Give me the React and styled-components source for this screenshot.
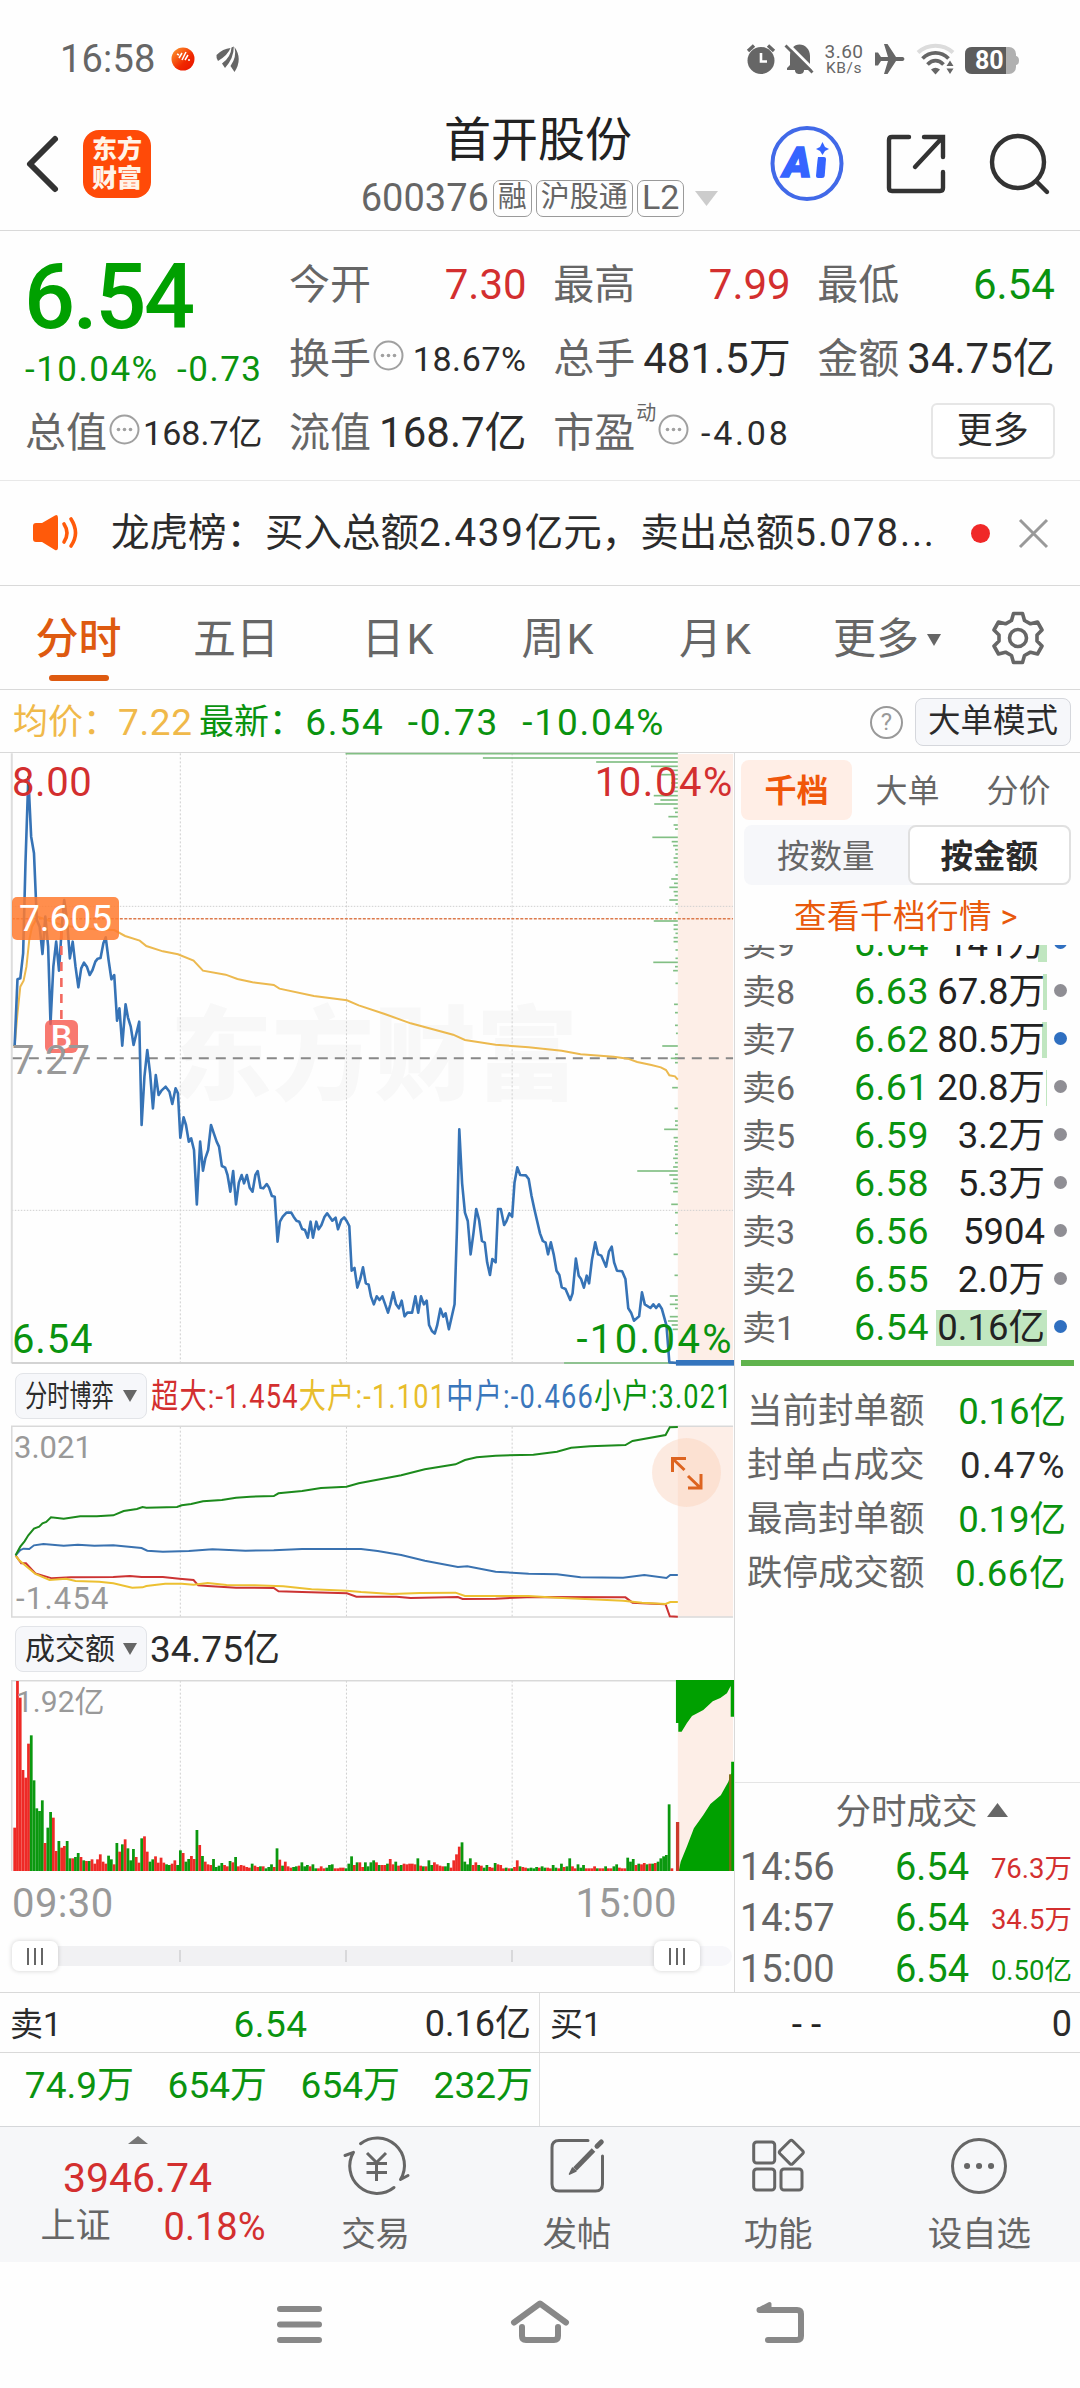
import styled, { createGlobalStyle } from "styled-components";

const colors = {
  green: "#0a930f",
  red: "#d32f2f",
  gray: "#666666",
  light: "#999999",
  dark: "#2b2b2b",
  orange: "#de5a10",
  yellow: "#f0b94a",
  blue: "#3a76bb",
  line: "#d9d9d9",
};

const GlobalStyle = createGlobalStyle`
  * {
    box-sizing: border-box;
  }
  body {
    margin: 0;
    background: #ffffff;
    color: ${colors.dark};
    font-family: Roboto, "Noto Sans CJK SC", sans-serif;
    line-height: 1;
  }
  svg {
    display: block;
    flex-shrink: 0;
    overflow: visible;
  }
`;

// ---------- data ----------

const quotes = [
  { label: "今开", value: "7.30", color: colors.red },
  { label: "最高", value: "7.99", color: colors.red },
  { label: "最低", value: "6.54", color: colors.green },
  { label: "换手", value: "18.67%", dots: true },
  { label: "总手", value: "481.5万" },
  { label: "金额", value: "34.75亿" },
];

const asks = [
  { name: "卖9", price: "6.64", amount: "141万", bar: 9, dot: "#2f6fc0" },
  { name: "卖8", price: "6.63", amount: "67.8万", bar: 4 },
  { name: "卖7", price: "6.62", amount: "80.5万", bar: 5, dot: "#2f6fc0" },
  { name: "卖6", price: "6.61", amount: "20.8万", bar: 1 },
  { name: "卖5", price: "6.59", amount: "3.2万", bar: 0 },
  { name: "卖4", price: "6.58", amount: "5.3万", bar: 0 },
  { name: "卖3", price: "6.56", amount: "5904", bar: 0 },
  { name: "卖2", price: "6.55", amount: "2.0万", bar: 0 },
  { name: "卖1", price: "6.54", amount: "0.16亿", bar: 111, dot: "#2f6fc0" },
];

const seals = [
  { label: "当前封单额", value: "0.16亿", color: colors.green },
  { label: "封单占成交", value: "0.47%", color: colors.dark, spacing: 1.6 },
  { label: "最高封单额", value: "0.19亿", color: colors.green },
  { label: "跌停成交额", value: "0.66亿", color: colors.green, spacing: 0.6 },
];

const deals = [
  { time: "14:56", price: "6.54", amount: "76.3万", color: colors.red },
  { time: "14:57", price: "6.54", amount: "34.5万", color: colors.red },
  { time: "15:00", price: "6.54", amount: "0.50亿", color: colors.green },
];

const flows = [
  { text: "超大:-1.454", color: colors.red },
  { text: "大户:-1.101", color: "#e8bd2c" },
  { text: "中户:-0.466", color: colors.blue },
  { text: "小户:3.021", color: colors.green },
];

const priceLine =
  "31,918 37,718 43,715 49,640 54,368 60,112 66,290 72,340 78,540 84,560 90,642 96,530 102,620 107,852 113,680 119,605 125,692 131,560 136,480 142,540 148,655 154,605 160,680 166,742 172,685 178,668 184,680 190,705 196,690 202,665 207,656 213,654 219,610 224,592 230,660 236,718 242,705 248,842 253,805 259,917 266,793 271,832 277,860 283,915 289,880 295,845 300,1155 306,1010 312,930 318,1000 324,1105 330,1005 336,1065 342,1052 351,1040 359,1055 365,1092 372,1045 377,1060 382,1193 389,1132 394,1155 400,1205 405,1195 411,1230 417,1393 424,1205 430,1292 435,1255 441,1230 447,1155 453,1180 459,1205 464,1220 470,1278 477,1283 482,1305 488,1355 494,1293 500,1393 506,1328 512,1305 517,1330 523,1305 529,1343 535,1355 541,1305 546,1293 552,1343 558,1345 565,1332 570,1343 576,1368 582,1370 588,1505 593,1445 599,1430 607,1418 617,1418 622,1430 628,1442 634,1445 640,1467 646,1470 652,1493 658,1445 663,1493 670,1445 675,1468 681,1455 687,1432 693,1420 699,1432 704,1442 711,1433 716,1468 723,1440 729,1432 734,1442 740,1458 745,1592 751,1584 757,1643 763,1618 769,1582 775,1630 781,1634 786,1670 792,1693 798,1669 804,1680 810,1669 816,1693 822,1718 827,1693 833,1657 839,1693 845,1705 851,1682 857,1729 863,1718 873,1718 880,1669 886,1718 892,1669 898,1693 904,1682 909,1755 915,1773 921,1781 926,1757 933,1706 939,1730 944,1720 951,1768 957,1730 963,1693 968,1470 973,1168 979,1330 985,1418 991,1443 997,1543 1003,1480 1009,1407 1015,1440 1021,1503 1027,1508 1032,1567 1038,1605 1043,1557 1050,1567 1055,1407 1061,1407 1068,1455 1073,1443 1079,1420 1085,1430 1090,1328 1096,1282 1102,1305 1114,1306 1120,1317 1126,1367 1132,1407 1144,1480 1150,1503 1156,1508 1161,1543 1167,1507 1173,1543 1179,1592 1185,1605 1190,1642 1198,1647 1208,1680 1213,1660 1220,1556 1226,1607 1231,1617 1237,1643 1243,1607 1248,1630 1254,1560 1261,1507 1267,1543 1274,1547 1284,1580 1290,1535 1296,1520 1301,1567 1307,1592 1318,1594 1325,1617 1331,1705 1337,1718 1343,1742 1354,1729 1360,1657 1366,1693 1378,1704 1384,1693 1390,1704 1396,1693 1402,1706 1412,1757 1418,1867 1436,1869";

const averageLine =
  "31,918 37,820 43,740 50,722 56,680 62,600 68,560 80,530 100,540 130,555 160,562 200,568 242,570 265,588 296,602 310,618 345,634 377,643 410,662 430,692 478,704 503,717 535,727 580,735 592,746 665,768 735,781 760,796 815,822 870,850 960,884 985,900 1050,914 1120,922 1190,932 1230,943 1300,950 1330,956 1350,966 1380,975 1400,982 1411,990 1418,1006 1430,1009 1436,1019";

// [y, left edge] of the horizontal bars that grow from the close line
const priceBars = [
  [41, 732], [54, 1023], [66, 1263], [79, 1379], [91, 1423], [104, 1395],
  [117, 1426], [129, 1422], [142, 1426], [154, 1428], [167, 1385], [180, 1399],
  [192, 1386], [205, 1427], [217, 1430], [230, 1416], [255, 1427], [267, 1430],
  [292, 1382], [305, 1423], [317, 1426], [329, 1430], [342, 1431], [354, 1427],
  [367, 1427], [380, 1431], [405, 1431], [417, 1422], [430, 1428], [442, 1418],
  [455, 1427], [467, 1429], [480, 1418], [492, 1431], [518, 1431], [543, 1385],
  [555, 1427], [568, 1427], [580, 1431], [593, 1427], [605, 1427], [630, 1431],
  [655, 1431], [667, 1384], [680, 1430], [692, 1426], [730, 1431], [793, 1428],
  [818, 1430], [856, 1430], [880, 1432], [918, 1403], [943, 1430], [955, 1421],
  [968, 1430], [1043, 1424], [1105, 1429], [1143, 1430], [1156, 1430],
  [1168, 1407], [1193, 1427], [1205, 1430], [1218, 1428], [1230, 1429],
  [1243, 1430], [1255, 1426], [1268, 1430], [1281, 1426], [1293, 1350],
  [1305, 1418], [1318, 1426], [1330, 1420], [1343, 1429], [1355, 1426],
  [1393, 1422], [1418, 1430], [1455, 1430], [1480, 1430], [1543, 1427],
  [1606, 1429], [1668, 1419], [1680, 1430], [1693, 1419], [1705, 1430],
  [1730, 1419], [1743, 1415], [1755, 1423], [1768, 1425], [1869, 1195],
];

const flowLines = [
  {
    color: "#cc3333",
    points:
      "33,616 45,640 55,640 75,670 110,685 150,682 240,681 275,678 300,681 345,681 380,686 410,690 420,706 440,708 500,713 580,714 590,724 640,726 735,730 755,740 840,740 870,744 970,741 980,747 1050,746 1130,741 1325,742 1340,758 1360,760 1410,763 1419,799 1436,800",
  },
  {
    color: "#ecc032",
    points:
      "33,616 40,630 55,648 75,672 105,690 140,686 160,693 210,695 240,700 280,713 302,712 310,708 350,701 385,701 410,704 440,699 480,705 540,706 600,709 660,718 735,722 765,726 830,732 890,729 965,728 985,738 1120,738 1180,743 1240,747 1320,752 1360,758 1410,762 1420,756 1436,756",
  },
  {
    color: "#3a72b0",
    points:
      "33,616 43,600 50,596 62,597 72,586 92,582 135,587 165,584 200,587 240,586 300,594 312,602 345,605 400,603 450,598 520,602 580,601 640,597 765,597 800,603 850,615 900,632 970,651 990,649 1050,665 1120,671 1180,673 1230,682 1320,683 1365,675 1412,684 1420,675 1436,675",
  },
  {
    color: "#1c8a1c",
    points:
      "33,616 43,590 52,574 60,556 72,536 83,530 90,520 98,516 108,502 135,506 170,499 205,499 240,496 262,483 290,477 302,471 310,473 375,471 385,466 405,462 430,454 470,450 500,443 530,440 580,438 590,430 640,423 680,414 734,410 760,400 850,376 900,358 965,343 985,330 1010,322 1050,317 1130,314 1180,305 1210,293 1250,289 1325,285 1340,273 1410,255 1419,232 1436,231",
  },
];

// one bar per minute, a negative number is a falling minute
const volumes = [
  130, 570, 520, 303, 280, 382, -407, -272, -188, -180, -212, 84, -130, -177,
  160, 60, -90, 70, 75, -90, -38, 38, -42, -54, 42, -32, 30, -30, 35, 22, 35,
  50, 28, 22, -46, -35, 20, -84, 58, -80, 95, -68, -32, -66, 42, 25, -98, 104,
  58, -28, -35, 44, 25, 40, 25, -20, -18, 22, 32, -18, -62, 54, -28, -36, 45,
  36, -123, 78, -45, 28, 20, 18, -36, -12, -16, -24, 18, 14, -30, 26, -42, 14,
  18, 16, 12, 10, -22, 16, 12, -14, 14, -8, -12, -20, 12, -68, 34, -16, 28, 14,
  10, -12, -14, 16, -26, -14, -18, 14, -20, -8, 8, 14, 8, -10, -18, -20, 8, 8,
  10, 10, -8, -22, -44, 18, -26, 26, 12, -26, -14, -26, -32, 26, -18, 18, 18,
  -22, 36, 20, -28, 16, -18, 22, 20, 22, 22, 20, -38, 16, -14, 14, -32, -18, 26,
  20, 16, 14, -14, -24, 10, 32, 50, 73, -86, -28, -20, -38, 18, 26, -18, 16,
  -10, -18, 12, 10, -24, 20, 18, 8, -10, 8, -8, 12, 32, -14, 12, 10, -8, -10,
  -8, -12, 10, -14, -10, 10, 8, -18, -10, 8, -22, 12, -14, -38, 14, 8, -20,
  -10, -18, 8, 8, 8, 14, -8, 8, 8, -14, 8, 8, -14, -20, 10, 8, 8, -40, -28,
  -36, 18, -22, 20, 24, -20, 22, -22, 24, -28, -38, -44, -48, -200, 8,
];

// ---------- icons ----------

const DotsCircle = () => (
  <svg width="31" height="31" viewBox="0 0 31 31">
    <circle cx="15.5" cy="15.5" r="14" fill="none" stroke="#a0a0a0" strokeWidth="2" />
    <circle cx="9.5" cy="15.5" r="1.8" fill="#a0a0a0" />
    <circle cx="15.5" cy="15.5" r="1.8" fill="#a0a0a0" />
    <circle cx="21.5" cy="15.5" r="1.8" fill="#a0a0a0" />
  </svg>
);

const Triangle = ({ w, h, color, up }) => (
  <svg width={w} height={h} viewBox="0 0 20 14" preserveAspectRatio="none">
    <path d={up ? "M10 0L20 14H0Z" : "M0 0H20L10 14Z"} fill={color} />
  </svg>
);

const StatusIcons = () => (
  <svg width="274" height="34" viewBox="0 0 274 34" fill="#666">
    {/* alarm */}
    <circle cx="15" cy="18.5" r="13.5" />
    <path d="M2 9L8 3.5M28 9L22 3.5" stroke="#666" strokeWidth="3.4" fill="none" />
    <path d="M15 11V19.5H21" stroke="#fff" strokeWidth="2.6" fill="none" />
    {/* muted bell */}
    <path d="M41 28V26L44 23V14C44 7 48 2.5 53.5 2.5S64 7 64 14V23L67 26V28H58C58 31 56 32 53.5 32S49 31 49 28Z" />
    <path d="M39 -1L69 29" stroke="#fefefe" strokeWidth="3" />
    <path d="M39.500 3.500L66.500 30.500" stroke="#666" strokeWidth="2.800" />
    {/* airplane */}
    <path d="M129 10.5H132L135 15H142L138 2H141.5L150 15H156.5C159 15.500 159 18.500 156.500 19H150L141.500 32H138L142 19H135L132 23.500H129Z" />
    {/* wifi */}
    <path d="M172 10.500C182 1.500 197 1.500 207 10.500" fill="none" stroke="#dcdcdc" strokeWidth="4" />
    <path d="M176.500 16.500C184 9 195 9 202.500 16.500M181.500 22.500C186.500 17.500 192.500 17.500 197.500 22.500" fill="none" stroke="#666" strokeWidth="3.800" />
    <path d="M185 27.500Q189.500 24 194 27.500L189.500 32.500Z" />
    <path d="M200.500 24L204 18.500L207.500 24ZM200.500 26.500L204 32L207.500 26.500Z" />
    {/* battery */}
    <rect x="219" y="5" width="51" height="27" rx="7" fill="#b0b0b0" />
    <path d="M226 5H260V32H226Q219 32 219 25V12Q219 5 226 5Z" fill="#5c5c5c" />
    <path d="M270 14Q273 14.500 273 18.500T270 23Z" fill="#b0b0b0" />
  </svg>
);

const Gear = () => (
  <svg width="54" height="54" viewBox="0 0 54 54" fill="none" stroke="#666" strokeWidth="3.6" strokeLinejoin="round">
    <path d="M22.500 2.500H31.500L33.500 9.500L39.500 12.800L46.500 11L51 19L46 24V30L51 35L46.500 43L39.500 41.200L33.500 44.500L31.500 51.500H22.500L20.500 44.500L14.500 41.200L7.500 43L3 35L8 30V24L3 19L7.500 11L14.500 12.800L20.500 9.500Z" />
    <circle cx="27" cy="27" r="8.500" />
  </svg>
);

const footerIcons = [
  {
    label: "交易",
    icon: (
      <>
        <path d="M17.500 10.700A27.300 27.300 0 0 1 57.500 46.500L65 42.500M51 54.500A27.300 27.300 0 0 1 10.500 19.300L2 22.500" />
        <path d="M24 20L33.500 29.500L43 20M33.500 29.500V48M23.500 30.500H44M23.500 39.500H44" strokeLinecap="butt" />
      </>
    ),
  },
  {
    label: "发帖",
    icon: (
      <>
        <path d="M44 7.500H15Q8 7.500 8 14.500V51Q8 58 15 58H51.500Q58.500 58 58.500 51V23" />
        <path d="M31 36L49.500 17" strokeWidth="5" strokeLinecap="butt" />
        <path d="M53 13.200L57.300 8.900" strokeWidth="5" />
        <path d="M25.500 41.200L28.500 35L32 38Z" fill="#666" strokeWidth="1.500" />
      </>
    ),
  },
  {
    label: "功能",
    icon: (
      <>
        <rect x="8.700" y="9" width="21" height="21" rx="3" />
        <rect x="8.700" y="36" width="21" height="21" rx="3" />
        <rect x="36" y="36" width="21" height="21" rx="3" />
        <path d="M44.800 8Q46.300 6.600 47.800 8L57.600 17.800Q59 19.300 57.600 20.800L47.800 30.600Q46.300 32 44.800 30.600L35 20.800Q33.600 19.300 35 17.800Z" />
      </>
    ),
  },
  {
    label: "设自选",
    icon: (
      <>
        <circle cx="33" cy="33" r="26.500" />
        <path d="M21 33H21.100M33 33H33.100M45 33H45.100" strokeWidth="6" />
      </>
    ),
  },
];

// ---------- charts ----------

const Grid = ({ top, bottom }) => (
  <g stroke="#cfcfcf" strokeWidth="1" strokeDasharray="2 2">
    {[382, 734, 1085].map((x) => (
      <line key={x} x1={x} x2={x} y1={top} y2={bottom} vectorEffect="non-scaling-stroke" />
    ))}
  </g>
);

const PriceChart = () => (
  <ChartBox $height={614}>
    <Watermark>东方财富</Watermark>
    <ChartSvg viewBox="0 36 1555 1842" preserveAspectRatio="none">
      <rect x="1436" y="42" width="117" height="1830" fill="#fdeee7" />
      <Grid top={40} bottom={1868} />
      <g fill="none" strokeWidth="1">
        <path d="M25 499H1553M25 1411H1553" stroke="#cfcfcf" strokeDasharray="1.5 1.5" vectorEffect="non-scaling-stroke" />
        <path d="M25 955H1553" stroke="#888" strokeWidth="2" strokeDasharray="10 7" vectorEffect="non-scaling-stroke" />
        <path d="M25 536H1553" stroke="#dc7a4c" strokeWidth="1.5" strokeDasharray="3 1.5" vectorEffect="non-scaling-stroke" />
        <path d="M25 40V1870" stroke="#dddddd" strokeWidth="2" vectorEffect="non-scaling-stroke" />
        <path d="M25 1869H1436" stroke="#d3d3d3" strokeWidth="2" vectorEffect="non-scaling-stroke" />
      </g>
      {priceBars.map(([y, x]) => (
        <rect key={y} x={x} y={y - 2.5} width={1436 - x} height="5" fill="#82bf84" />
      ))}
      <polyline points={averageLine} fill="none" stroke="#ecb94f" strokeWidth="2" vectorEffect="non-scaling-stroke" />
      <polyline points={priceLine} fill="none" stroke="#3673b6" strokeWidth="2.6" strokeLinejoin="round" vectorEffect="non-scaling-stroke" />
      <path d="M130 570V850" stroke="#f3695f" strokeWidth="2.6" strokeDasharray="9 7" vectorEffect="non-scaling-stroke" />
      <rect x="1432" y="1860" width="123" height="17" fill="#3474bd" />
    </ChartSvg>
    <BuyBadge>B</BuyBadge>
    <CostBadge>7.605</CostBadge>
    <ChartLabel $top={11} $left={12} $color={colors.red} $spacing={0.6}>8.00</ChartLabel>
    <ChartLabel $top={11} $right={0} $color={colors.red} $spacing={1.6}>10.04%</ChartLabel>
    <ChartLabel $top={289} $left={12} $color={colors.light}>7.27</ChartLabel>
    <ChartLabel $top={568} $left={12} $color={colors.green} $spacing={0.8}>6.54</ChartLabel>
    <ChartLabel $top={568} $right={0} $color={colors.green} $spacing={2.4}>-10.04%</ChartLabel>
  </ChartBox>
);

const FlowChart = () => (
  <ChartBox $height={192}>
    <ChartSvg viewBox="0 228 1555 576" preserveAspectRatio="none">
      <rect x="1436" y="230" width="117" height="570" fill="#fdeee7" />
      <Grid top={230} bottom={800} />
      <path d="M1553 229H25V801H1553" fill="none" stroke="#d9d9d9" strokeWidth="1.5" vectorEffect="non-scaling-stroke" />
      {flowLines.map((line) => (
        <polyline key={line.color} points={line.points} fill="none" stroke={line.color} strokeWidth="2" vectorEffect="non-scaling-stroke" />
      ))}
    </ChartSvg>
    <ChartLabel $top={7} $left={14} $size={31} $color={colors.light}>3.021</ChartLabel>
    <ChartLabel $top={158} $left={16} $size={31} $color={colors.light} $spacing={1.2}>-1.454</ChartLabel>
    <ExpandButton>
      <svg width="36" height="36" viewBox="0 0 36 36" fill="none" stroke="#dd6420" strokeWidth="3">
        <path d="M3.500 17V3.500H17M4 4L15.500 15M19 21L31 32.500M32 19V33H19" />
      </svg>
    </ExpandButton>
  </ChartBox>
);

const VolumeChart = () => (
  <ChartBox $height={192}>
    <ChartSvg viewBox="0 60 1555 576" preserveAspectRatio="none">
      <rect x="1436" y="62" width="117" height="571" fill="#fdeee7" />
      <Grid top={62} bottom={633} />
      <path d="M1553 62H25V633" fill="none" stroke="#d9d9d9" strokeWidth="1.5" vectorEffect="non-scaling-stroke" />
      {volumes.map((v, i) => (
        <rect
          key={i}
          x={28.2 + i * 5.85}
          y={633 - Math.abs(v)}
          width={5.85}
          height={Math.abs(v)}
          fill={v > 0 ? "#ee2a26" : "#0b980f"}
        />
      ))}
      <g fill="#00a000">
        <path d="M1432 60V189H1437V215H1444L1455 190L1466 168L1478 159L1490 150L1510 124L1526 114L1540 100L1548 78V170H1555V60Z" />
        <path d="M1438 633L1442 605L1455 560L1470 505L1490 465L1505 432L1527 406L1543 365L1549 340V305H1555V633Z" />
      </g>
      <rect x="1544.5" y="343" width="5" height="290" fill="#7c6a12" />
      <rect x="1432" y="486" width="7" height="147" fill="#cc3a2c" />
    </ChartSvg>
    <ChartLabel $top={7} $left={16} $size={30} $color={colors.light}>1.92亿</ChartLabel>
  </ChartBox>
);

// ---------- page ----------

const App = () => (
  <Page>
    <GlobalStyle />

    <StatusBar>
      <StatusLeft>
        <Clock>16:58</Clock>
        <svg width="24" height="24" viewBox="0 0 24 24">
          <defs>
            <linearGradient id="ball" x1="0" y1="0" x2="1" y2="1">
              <stop offset="0" stopColor="#ffa030" />
              <stop offset="0.6" stopColor="#f02800" />
              <stop offset="1" stopColor="#e81000" />
            </linearGradient>
          </defs>
          <circle cx="12" cy="12" r="11.5" fill="url(#ball)" />
          <path d="M6 7L8 8M8 11L11 6M11 13L15 5M14 13L17 8M17 13H19" stroke="#fff" strokeWidth="1.5" fill="none" />
        </svg>
        <svg width="24" height="26" viewBox="0 0 24 26" fill="#666">
          <path d="M0.500 9Q7 2.500 14.500 2Q12 9 2 15Q0 12 0.500 9ZM15.500 1.500L17.800 0.500Q18 12 9 22L6 17.500Q15 11 15.500 1.500ZM18.500 1Q27 13 18.500 26L14.500 20Q21 11 18.500 1Z" />
        </svg>
      </StatusLeft>
      <StatusRight>
        <StatusIcons />
        <Speed>
          <span>3.60</span>
          <small>KB/s</small>
        </Speed>
        <Battery>80</Battery>
      </StatusRight>
    </StatusBar>

    <Header>
      <HeaderSide>
        <svg width="36" height="58" viewBox="0 0 36 58" fill="none" stroke="#333" strokeWidth="6" strokeLinecap="round" strokeLinejoin="round">
          <path d="M30 4L5 29L30 54" />
        </svg>
        <Logo>
          <span>东方</span>
          <span>财富</span>
        </Logo>
      </HeaderSide>
      <Title>
        <h1>首开股份</h1>
        <TitleMeta>
          <span>600376</span>
          <Tag>融</Tag>
          <Tag>沪股通</Tag>
          <Tag $size={34}>L2</Tag>
          <Triangle w={23} h={15} color="#cccccc" />
        </TitleMeta>
      </Title>
      <HeaderActions>
        <svg width="72" height="75" viewBox="0 0 72 75">
          <ellipse cx="36" cy="37.5" rx="34.500" ry="35.500" fill="none" stroke="#4169e8" strokeWidth="4" />
          <text x="12" y="51" fontFamily="Roboto" fontSize="43" fontWeight="900" fontStyle="italic" fill="#3564ff" stroke="#3564ff" strokeWidth="1.500">A</text>
          <path d="M47 31Q46.500 33 45 50Q45 52 47 52H51Q53.500 52 53.700 50L55 33Q55 31 53 31Z" fill="#3564ff" />
          <path d="M51.500 16L54 21L58 23L54 25L51.500 29L49 25L45 23L49 21Z" fill="#3564ff" />
        </svg>
        <svg width="60" height="60" viewBox="0 0 60 60" fill="none" stroke="#333" strokeWidth="4.4" strokeLinecap="round">
          <path d="M23 3H6Q3 3 3 6V54Q3 57 6 57H54Q57 57 57 54V38M38 3H57V23M56 4L29 33" />
        </svg>
        <svg width="62" height="62" viewBox="0 0 62 62" fill="none" stroke="#333" strokeWidth="4.4" strokeLinecap="round">
          <circle cx="29" cy="29" r="26" />
          <path d="M48 49L58 59" />
        </svg>
      </HeaderActions>
    </Header>

    <QuotePanel>
      <BigQuote>
        <strong>6.54</strong>
        <p>
          <span>-10.04%</span>
          <span>-0.73</span>
        </p>
      </BigQuote>
      {quotes.map(({ label, value, color, dots }) => (
        <Cell key={label} $color={color} $small={dots} $spacing={dots ? 0.6 : 0}>
          <span>{label}</span>
          {dots && <DotsCircle />}
          <b>{value}</b>
        </Cell>
      ))}
      <Cell $small>
        <span>总值</span>
        <DotsCircle />
        <b>168.7亿</b>
      </Cell>
      <Cell>
        <span>流值</span>
        <b>168.7亿</b>
      </Cell>
      <Cell $small $spacing={2.8}>
        <span>市盈</span>
        <sup>动</sup>
        <DotsCircle />
        <b>-4.08</b>
      </Cell>
      <MoreCell>
        <button>更多</button>
      </MoreCell>
    </QuotePanel>

    <NewsBar>
      <svg width="46" height="38" viewBox="0 0 46 38" fill="#ff5a0a">
        <path d="M3 9Q0 9 0 12V25Q0 28 3 28H9L22 36Q25 37 25 33V4Q25 0 22 1.500L9 9Z" />
        <path d="M31 10Q37 19 31 28M38 5Q47 19 38 32" fill="none" stroke="#ff5a0a" strokeWidth="3.6" strokeLinecap="round" />
      </svg>
      <NewsText>
        龙虎榜：买入总额<i>2.439</i>亿元，卖出总额<i>5.078...</i>
      </NewsText>
      <RedDot />
      <svg width="31" height="31" viewBox="0 0 31 31" stroke="#999" strokeWidth="3">
        <path d="M2 2L29 29M29 2L2 29" />
      </svg>
    </NewsBar>

    <TabBar>
      <Tab $active $width={157}>分时</Tab>
      <Tab $width={158}>五日</Tab>
      <Tab $width={167} $spacing={2}>日K</Tab>
      <Tab $width={153} $spacing={2}>周K</Tab>
      <Tab $width={162} $spacing={2}>月K</Tab>
      <Tab $width={180}>
        更多
        <Triangle w={14} h={12} color="#666" />
      </Tab>
      <GearBox>
        <Gear />
      </GearBox>
    </TabBar>

    <InfoBar>
      <InfoText $color={colors.yellow} $width={186}>
        均价：<span>7.22</span>
      </InfoText>
      <InfoText $color={colors.green} $spacing={1.2}>
        最新：<span>6.54</span>
        <span>-0.73</span>
        <span>-10.04%</span>
      </InfoText>
      <Help>?</Help>
      <ModeButton>大单模式</ModeButton>
    </InfoBar>

    <Main>
      <Charts>
        <PriceChart />
        <SelectRow>
          <Select>
            <SelectName $scale={0.74}>分时博弈</SelectName>
            <Triangle w={14} h={12} color="#666" />
          </Select>
          <FlowLegend>
            {flows.map(({ text, color }) => (
              <FlowItem key={text} $color={color}>{text}</FlowItem>
            ))}
          </FlowLegend>
        </SelectRow>
        <FlowChart />
        <SelectRow $height={62}>
          <Select>
            <SelectName>成交额</SelectName>
            <Triangle w={14} h={12} color="#666" />
          </Select>
          <Turnover>34.75亿</Turnover>
        </SelectRow>
        <VolumeChart />
        <TimeAxis>
          <span>09:30</span>
          <span>15:00</span>
        </TimeAxis>
        <Slider>
          <Handle>
            <i />
            <i />
            <i />
          </Handle>
          <Track>
            <i />
            <i />
            <i />
          </Track>
          <Handle>
            <i />
            <i />
            <i />
          </Handle>
          <TrackEnd />
        </Slider>
      </Charts>

      <Side>
        <SideTabs>
          <SideTab $active>千档</SideTab>
          <SideTab>大单</SideTab>
          <SideTab>分价</SideTab>
        </SideTabs>
        <Segment>
          <SegmentItem>按数量</SegmentItem>
          <SegmentItem $active>按金额</SegmentItem>
        </Segment>
        <DepthLink>{"查看千档行情 >"}</DepthLink>
        <AskList>
          {asks.map(({ name, price, amount, bar, dot }) => (
            <Ask key={name}>
              <span>{name}</span>
              <AskPrice>{price}</AskPrice>
              <Amount>
                <AmountBar style={{ width: bar }} />
                <span>{amount}</span>
              </Amount>
              <Dot $color={dot} />
            </Ask>
          ))}
        </AskList>
        <SealList>
          {seals.map(({ label, value, color, spacing }) => (
            <Seal key={label} $color={color} $spacing={spacing}>
              <span>{label}</span>
              <b>{value}</b>
            </Seal>
          ))}
        </SealList>
        <Deals>
          <DealsTitle>
            分时成交
            <Triangle w={21} h={14} color="#666" up />
          </DealsTitle>
          {deals.map(({ time, price, amount, color }) => (
            <Deal key={time} $color={color}>
              <span>{time}</span>
              <b>{price}</b>
              <em>{amount}</em>
            </Deal>
          ))}
        </Deals>
      </Side>
    </Main>

    <BestRow>
      <BestHalf>
        <span>卖1</span>
        <BestPrice $color={colors.green}>6.54</BestPrice>
        <b>0.16亿</b>
      </BestHalf>
      <BestHalf>
        <span>买1</span>
        <BestPrice $spacing={9}>--</BestPrice>
        <b>0</b>
      </BestHalf>
    </BestRow>
    <QueueRow>
      <Queue>
        {["74.9万", "654万", "654万", "232万"].map((text, i) => (
          <span key={i}>{text}</span>
        ))}
      </Queue>
      <Queue />
    </QueueRow>

    <Footer>
      <Index>
        <Triangle w={20} h={8} color="#777" up />
        <strong>3946.74</strong>
        <p>
          <span>上证</span>
          <em>0.18%</em>
        </p>
      </Index>
      {footerIcons.map(({ label, icon }) => (
        <FooterItem key={label}>
          <svg width="66" height="66" viewBox="0 0 66 66" fill="none" stroke="#666" strokeWidth="3" strokeLinecap="round" strokeLinejoin="round">
            {icon}
          </svg>
          {label}
        </FooterItem>
      ))}
    </Footer>

    <SystemNav>
      <svg width="48" height="44" viewBox="0 0 48 44" stroke="#888" strokeWidth="6" strokeLinecap="round">
        <path d="M4 6H43M4 21.5H43M4 37H43" />
      </svg>
      <svg width="60" height="46" viewBox="0 0 60 46" fill="none" stroke="#888" strokeWidth="6" strokeLinecap="round" strokeLinejoin="round">
        <path d="M4 20.500L30 1.500L56 20.500M12 25V34Q12 38 16 38H44Q48 38 48 34V25" />
      </svg>
      <svg width="50" height="46" viewBox="0 0 50 46" fill="none" stroke="#888" strokeWidth="6" strokeLinecap="round" strokeLinejoin="round">
        <path d="M4.500 8H42Q46 8 46 12V34Q46 38 42 38H13" />
        <path d="M4 7.500L14.500 2V8Z" fill="#888" strokeWidth="4" />
      </svg>
    </SystemNav>
  </Page>
);

export default App;

const Page = styled.div`
  width: 1080px;
  height: 2388px;
  overflow: hidden;
  background: #fefefe;
  display: flex;
  flex-direction: column;
`;

const StatusBar = styled.div`
  height: 118px;
  padding: 0 60px 0 60px;
  display: flex;
  align-items: center;
  justify-content: space-between;
  color: ${colors.gray};
`;

const StatusLeft = styled.div`
  display: flex;
  align-items: center;

  svg:first-of-type {
    margin-left: 15px;
    margin-right: 21px;
  }
`;

const Clock = styled.span`
  font-size: 38px;
  letter-spacing: 0.2px;
`;

const StatusRight = styled.div`
  position: relative;
`;

const Speed = styled.div`
  position: absolute;
  left: 76px;
  top: 1px;
  width: 44px;
  display: flex;
  flex-direction: column;
  align-items: center;

  span {
    font-size: 19px;
    line-height: 17px;
    letter-spacing: 0.5px;
  }
  small {
    font-size: 15.5px;
    line-height: 17px;
    letter-spacing: 0.5px;
  }
`;

const Battery = styled.span`
  position: absolute;
  left: 229px;
  top: 5px;
  width: 32px;
  font-size: 25px;
  line-height: 28px;
  font-weight: 700;
  color: #ffffff;
`;

const Header = styled.header`
  height: 113px;
  border-bottom: 1px solid ${colors.line};
  padding: 0 29px 0 25px;
  display: grid;
  grid-template-columns: 300px 1fr 282px;
  grid-template-rows: 91px;
  align-items: center;
`;

const HeaderSide = styled.div`
  display: flex;
  align-items: center;
  gap: 22px;
`;

const Logo = styled.div`
  width: 68px;
  height: 68px;
  border-radius: 16px;
  background: #ff4a08;
  color: #fff4e8;
  font-weight: 900;
  font-size: 25px;
  display: flex;
  flex-direction: column;
  align-items: center;
  justify-content: center;

  span {
    line-height: 29px;
  }
`;

const Title = styled.div`
  display: flex;
  flex-direction: column;
  align-items: center;
  align-self: start;
  margin: -6px 15px 0 0;

  h1 {
    margin: 0 0 11px;
    font-weight: 400;
    font-size: 47px;
    line-height: 56px;
    color: #222222;
    padding-right: 3px;
  }
`;

const TitleMeta = styled.div`
  display: flex;
  align-items: center;
  gap: 4px;
  color: ${colors.gray};
  font-size: 38px;
  white-space: nowrap;

  svg {
    margin-left: 7px;
  }
`;

const Tag = styled.span`
  height: 37px;
  padding: 0 4px;
  border: 1.5px solid #9a9a9a;
  border-radius: 7px;
  font-size: ${({ $size = 29 }) => $size}px;
  line-height: 33px;
`;

const HeaderActions = styled.div`
  display: flex;
  align-items: center;
  justify-content: flex-end;
  gap: 43px;
`;

const QuotePanel = styled.section`
  height: 250px;
  border-bottom: 1px solid #e8e8e8;
  padding: 17px 25px 0 25px;
  display: grid;
  grid-template-columns: repeat(4, 237.5px);
  grid-template-rows: repeat(3, 74px);
  column-gap: 26.6px;
`;

const BigQuote = styled.div`
  grid-row: span 2;
  color: ${colors.green};

  strong {
    display: block;
    font-weight: 500;
    font-size: 90px;
    line-height: 100px;
    letter-spacing: -2.4px;
    color: #00a000;
    margin-left: -1px;
  }
  p {
    margin: 5px 0 0;
    display: flex;
    justify-content: space-between;
    font-size: 35px;
    line-height: 34px;
    letter-spacing: 1.5px;
  }
`;

const Cell = styled.div`
  display: flex;
  align-items: center;
  white-space: nowrap;

  span {
    font-size: 41px;
    color: ${colors.gray};
  }
  svg {
    margin-left: 2px;
    margin-top: -8px;
  }
  sup {
    font-size: 20px;
    color: ${colors.gray};
    margin: -40px 0 0 1px;
    line-height: 20px;
  }
  b {
    margin-left: auto;
    font-weight: 400;
    font-size: ${({ $small }) => ($small ? 34 : 42)}px;
    letter-spacing: ${({ $spacing = 0 }) => $spacing}px;
    color: ${({ $color = colors.dark }) => $color};
  }
`;

const MoreCell = styled.div`
  display: flex;
  align-items: center;
  justify-content: flex-end;

  button {
    width: 124px;
    height: 56px;
    margin-top: -4px;
    padding: 0;
    border: 2px solid #e6e6e6;
    border-radius: 6px;
    background: #ffffff;
    font: inherit;
    font-size: 36px;
    color: ${colors.dark};
  }
`;

const NewsBar = styled.div`
  height: 105px;
  border-bottom: 1px solid ${colors.line};
  padding: 0 31px 0 33px;
  display: flex;
  align-items: center;
`;

const NewsText = styled.p`
  margin: 0 38px 0 32px;
  width: 822px;
  font-size: 38.5px;
  white-space: nowrap;

  i {
    font-style: normal;
    letter-spacing: 1.8px;
  }
`;

const RedDot = styled.span`
  width: 19px;
  height: 19px;
  border-radius: 50%;
  background: #f02828;
  margin-right: 28px;
`;

const TabBar = styled.nav`
  height: 104px;
  border-bottom: 1px solid ${colors.line};
  display: flex;
  align-items: center;
`;

const Tab = styled.div`
  width: ${({ $width }) => $width}px;
  height: 103px;
  display: flex;
  align-items: center;
  justify-content: center;
  gap: 8px;
  position: relative;
  padding-top: 4px;
  font-size: 43px;
  letter-spacing: ${({ $spacing = 0 }) => $spacing}px;
  white-space: nowrap;
  color: ${({ $active }) => ($active ? colors.orange : colors.gray)};
  font-weight: ${({ $active }) => ($active ? 500 : 400)};

  &::after {
    content: "";
    display: ${({ $active }) => ($active ? "block" : "none")};
    position: absolute;
    left: 49px;
    bottom: 8px;
    width: 60px;
    height: 6px;
    border-radius: 3px;
    background: ${colors.orange};
  }
`;

const GearBox = styled.div`
  margin-left: 14px;
`;

const InfoBar = styled.div`
  height: 62px;
  padding: 2px 9px 0 13px;
  display: flex;
  align-items: center;
`;

const InfoText = styled.div`
  width: ${({ $width }) => ($width ? `${$width}px` : "auto")};
  display: flex;
  align-items: center;
  font-size: 35px;
  color: ${({ $color }) => $color};
  white-space: nowrap;

  span {
    font-size: 37px;
    margin-right: 22px;
    margin-left: ${({ $spacing = 0 }) => $spacing}px;
    letter-spacing: ${({ $spacing = 0 }) => $spacing + 0.6}px;
  }
`;

const Help = styled.span`
  margin-left: auto;
  width: 33px;
  height: 33px;
  border: 2.5px solid #999999;
  border-radius: 50%;
  font-size: 24px;
  line-height: 29px;
  text-align: center;
  color: #999999;
`;

const ModeButton = styled.div`
  margin-left: 12px;
  width: 156px;
  height: 48px;
  border: 1.5px solid #d5d7dc;
  border-radius: 8px;
  background: #f6f7fa;
  font-size: 32.5px;
  line-height: 45px;
  text-align: center;
`;

const Main = styled.main`
  height: 1241px;
  border-top: 1px solid ${colors.line};
  border-bottom: 1px solid ${colors.line};
  display: flex;
`;

const Charts = styled.section`
  width: 735px;
  margin-top: -1px;
  border-right: 1px solid ${colors.line};
`;

const ChartBox = styled.div`
  position: relative;
  height: ${({ $height }) => $height}px;
`;

const ChartSvg = styled.svg`
  position: relative;
  width: 734px;
  height: 100%;
`;

const Watermark = styled.div`
  position: absolute;
  left: 170px;
  top: 250px;
  font-size: 102px;
  line-height: 110px;
  font-weight: 900;
  color: #f8f8f8;
`;

const ChartLabel = styled.span`
  position: absolute;
  top: ${({ $top }) => $top}px;
  left: ${({ $left }) => ($left === undefined ? "auto" : `${$left}px`)};
  right: ${({ $right }) => ($right === undefined ? "auto" : `${$right}px`)};
  font-size: ${({ $size = 40 }) => $size}px;
  line-height: ${({ $size = 40 }) => ($size < 35 ? 30 : 40)}px;
  letter-spacing: ${({ $spacing = 0 }) => $spacing}px;
  color: ${({ $color }) => $color};
`;

const CostBadge = styled.span`
  position: absolute;
  left: 12px;
  top: 145px;
  width: 107px;
  height: 43px;
  border-radius: 5px;
  background: rgba(255, 124, 48, 0.86);
  color: #ffffff;
  font-size: 37px;
  line-height: 44px;
  text-align: center;
`;

const BuyBadge = styled.span`
  position: absolute;
  left: 45px;
  top: 268px;
  width: 33px;
  height: 33px;
  border-radius: 6px;
  background: rgba(247, 92, 80, 0.82);
  color: #ffffff;
  font-size: 34px;
  font-weight: 500;
  line-height: 34px;
  text-align: center;
`;

const ExpandButton = styled.div`
  position: absolute;
  left: 652px;
  top: 12px;
  width: 69px;
  height: 69px;
  border-radius: 50%;
  background: rgba(250, 205, 180, 0.4);
  display: flex;
  align-items: center;
  justify-content: center;
`;

const SelectRow = styled.div`
  height: ${({ $height = 60 }) => $height}px;
  padding-left: 15px;
  display: flex;
  align-items: center;
`;

const Select = styled.div`
  width: 132px;
  height: 46px;
  flex-shrink: 0;
  padding: 0 9px 0 9px;
  border: 1.5px solid #e2e4e8;
  border-radius: 8px;
  background: #f6f7fa;
  display: flex;
  align-items: center;
  justify-content: space-between;
`;

const SelectName = styled.span`
  width: 90px;
  font-size: 30px;
  white-space: nowrap;
  transform: scaleX(${({ $scale = 1 }) => $scale});
  transform-origin: 0 50%;
`;

const FlowLegend = styled.div`
  width: 724px;
  margin-left: 4px;
  display: flex;
  flex-shrink: 0;
  justify-content: space-between;
  transform: scaleX(0.8);
  transform-origin: 0 50%;
`;

const FlowItem = styled.span`
  font-size: 34px;
  letter-spacing: 1.5px;
  white-space: nowrap;
  color: ${({ $color }) => $color};
`;

const Turnover = styled.span`
  margin-left: 3px;
  font-size: 37px;
`;

const TimeAxis = styled.div`
  height: 66px;
  padding: 0 57px 2px 12px;
  display: flex;
  align-items: center;
  justify-content: space-between;
  font-size: 40px;
  letter-spacing: 0.4px;
  color: ${colors.light};
`;

const Slider = styled.div`
  height: 36px;
  padding: 0 2px 0 12px;
  display: flex;
  align-items: center;
`;

const Handle = styled.div`
  width: 46px;
  height: 30px;
  border-radius: 7px;
  background: #ffffff;
  box-shadow: 0 0 5px rgba(0, 0, 0, 0.18);
  display: flex;
  align-items: center;
  justify-content: center;
  gap: 5px;
  position: relative;

  i {
    width: 2px;
    height: 17px;
    background: #666666;
  }
`;

const Track = styled.div`
  width: 596px;
  height: 20px;
  background: #f1f1f3;
  padding-left: 121px;
  display: flex;
  align-items: center;
  gap: 164px;

  i {
    width: 2px;
    height: 12px;
    background: #d8d8da;
  }
`;

const TrackEnd = styled.div`
  flex: 1;
  height: 20px;
  background: #f7f7fa;
  border-radius: 0 10px 10px 0;
`;

const Side = styled.aside`
  width: 345px;
  display: flex;
  flex-direction: column;
`;

const SideTabs = styled.div`
  display: flex;
  padding: 7px 6px 0;
`;

const SideTab = styled.div`
  width: 111px;
  height: 60px;
  border-radius: 8px;
  font-size: 32px;
  line-height: 62px;
  text-align: center;
  color: ${({ $active }) => ($active ? "#f0560a" : colors.gray)};
  background: ${({ $active }) => ($active ? "#ffeee6" : "transparent")};
  font-weight: ${({ $active }) => ($active ? 700 : 400)};
`;

const Segment = styled.div`
  margin: 5px 9px 0;
  height: 60px;
  border-radius: 8px;
  background: #f6f7fa;
  display: flex;
`;

const SegmentItem = styled.div`
  width: 163.5px;
  height: 60px;
  border: 2px solid ${({ $active }) => ($active ? "#e0e0e0" : "transparent")};
  border-radius: 8px;
  background: ${({ $active }) => ($active ? "#ffffff" : "transparent")};
  font-size: 32.5px;
  line-height: 60px;
  text-align: center;
  color: ${({ $active }) => ($active ? colors.dark : colors.gray)};
  font-weight: ${({ $active }) => ($active ? 700 : 400)};
`;

const DepthLink = styled.div`
  height: 60px;
  font-size: 32.5px;
  line-height: 64px;
  letter-spacing: 0.5px;
  text-align: center;
  padding-right: 3px;
  color: #e8590c;
`;

const AskList = styled.div`
  height: 421px;
  margin: 0 6px;
  border-bottom: 6px solid #60b34d;
  overflow: hidden;
  display: flex;
  flex-direction: column;
  justify-content: flex-end;
  padding-bottom: 8px;
`;

const Ask = styled.div`
  height: 48px;
  flex-shrink: 0;
  padding-left: 1px;
  display: flex;
  align-items: center;
  font-size: 33px;
  color: ${colors.gray};

  & > span:first-child {
    width: 60px;
    font-size: 34px;
  }
`;

const AskPrice = styled.span`
  width: 127px;
  text-align: right;
  font-size: 37.5px;
  letter-spacing: 0.5px;
  color: ${colors.green};
`;

const Amount = styled.div`
  width: 118px;
  height: 36px;
  position: relative;
  display: flex;
  align-items: center;
  justify-content: flex-end;
  padding-right: 2px;
  font-size: 36.5px;
  color: #222222;

  span {
    position: relative;
  }
`;

const AmountBar = styled.i`
  position: absolute;
  right: 0;
  top: 0;
  height: 36px;
  background: #c0e6c0;
`;

const Dot = styled.i`
  width: 13px;
  height: 13px;
  margin: -4px 0 0 7px;
  border-radius: 50%;
  background: ${({ $color = "#8f8e94" }) => $color};
`;

const SealList = styled.div`
  padding: 19px 14px 0 12px;
  flex: 1;
`;

const Seal = styled.div`
  height: 54px;
  display: flex;
  align-items: center;
  justify-content: space-between;
  font-size: 35.5px;
  color: ${colors.gray};

  b {
    font-weight: 400;
    font-size: 36.5px;
    letter-spacing: ${({ $spacing = 0 }) => $spacing}px;
    color: ${({ $color }) => $color};
  }
`;

const Deals = styled.div`
  height: 210px;
  border-top: 1px solid #e5e5e5;
`;

const DealsTitle = styled.div`
  height: 58px;
  display: flex;
  align-items: center;
  justify-content: center;
  gap: 9px;
  padding: 2px 0 0 28px;
  font-size: 35.5px;
  color: ${colors.gray};

  svg {
    margin-top: -6px;
  }
`;

const Deal = styled.div`
  height: 51px;
  padding: 0 8px 0 5px;
  display: flex;
  align-items: center;
  font-size: 38px;
  color: ${colors.gray};

  span {
    width: 107px;
  }
  b {
    width: 122px;
    text-align: right;
    font-weight: 400;
    color: ${colors.green};
  }
  em {
    margin-left: auto;
    padding-top: 4px;
    font-style: normal;
    font-size: 27.5px;
    color: ${({ $color }) => $color};
  }
`;

const BestRow = styled.div`
  height: 60px;
  border-bottom: 1px solid ${colors.line};
  display: flex;
`;

const BestHalf = styled.div`
  width: 540px;
  padding: 3px 8px 0 10px;
  display: grid;
  grid-template-columns: 1fr 1fr 1fr;
  align-items: center;
  font-size: 33px;
  border-right: 1px solid #e0e0e0;

  &:last-child {
    border-right: none;
  }
  b {
    text-align: right;
    font-weight: 400;
    font-size: 36px;
  }
`;

const BestPrice = styled.span`
  text-align: center;
  font-size: 37px;
  letter-spacing: ${({ $spacing = 0.5 }) => $spacing}px;
  color: ${({ $color = "#222" }) => $color};
`;

const QueueRow = styled.div`
  height: 74px;
  border-bottom: 1px solid #d5d7da;
  display: flex;
`;

const Queue = styled.div`
  width: 540px;
  padding: 0 6px 9px 1px;
  display: grid;
  grid-template-columns: repeat(4, 133px);
  align-items: center;
  text-align: right;
  font-size: 37px;
  color: ${colors.green};
  border-right: 1px solid #e0e0e0;

  &:last-child {
    border-right: none;
  }
`;

const Footer = styled.footer`
  height: 135px;
  background: #f6f7f9;
  display: flex;
`;

const Index = styled.div`
  width: 275px;
  display: flex;
  flex-direction: column;
  align-items: center;
  padding-top: 9px;
  color: ${colors.red};

  strong {
    margin-top: 13px;
    font-weight: 400;
    font-size: 41px;
    line-height: 42px;
  }
  p {
    width: 225px;
    margin: 7px 0 0 31px;
    display: flex;
    justify-content: space-between;
    align-items: center;
    line-height: 42px;
  }
  span {
    font-size: 35px;
    color: ${colors.gray};
  }
  em {
    font-style: normal;
    font-size: 38px;
  }
`;

const FooterItem = styled.div`
  width: 201.25px;
  display: flex;
  flex-direction: column;
  align-items: center;
  gap: 18px;
  padding-top: 6px;
  font-size: 34.5px;
  color: ${colors.gray};
`;

const SystemNav = styled.div`
  height: 126px;
  display: grid;
  grid-template-columns: 240px 240px 240px;
  justify-content: center;
  justify-items: center;
  align-items: center;
  background: #fefefe;
`;
